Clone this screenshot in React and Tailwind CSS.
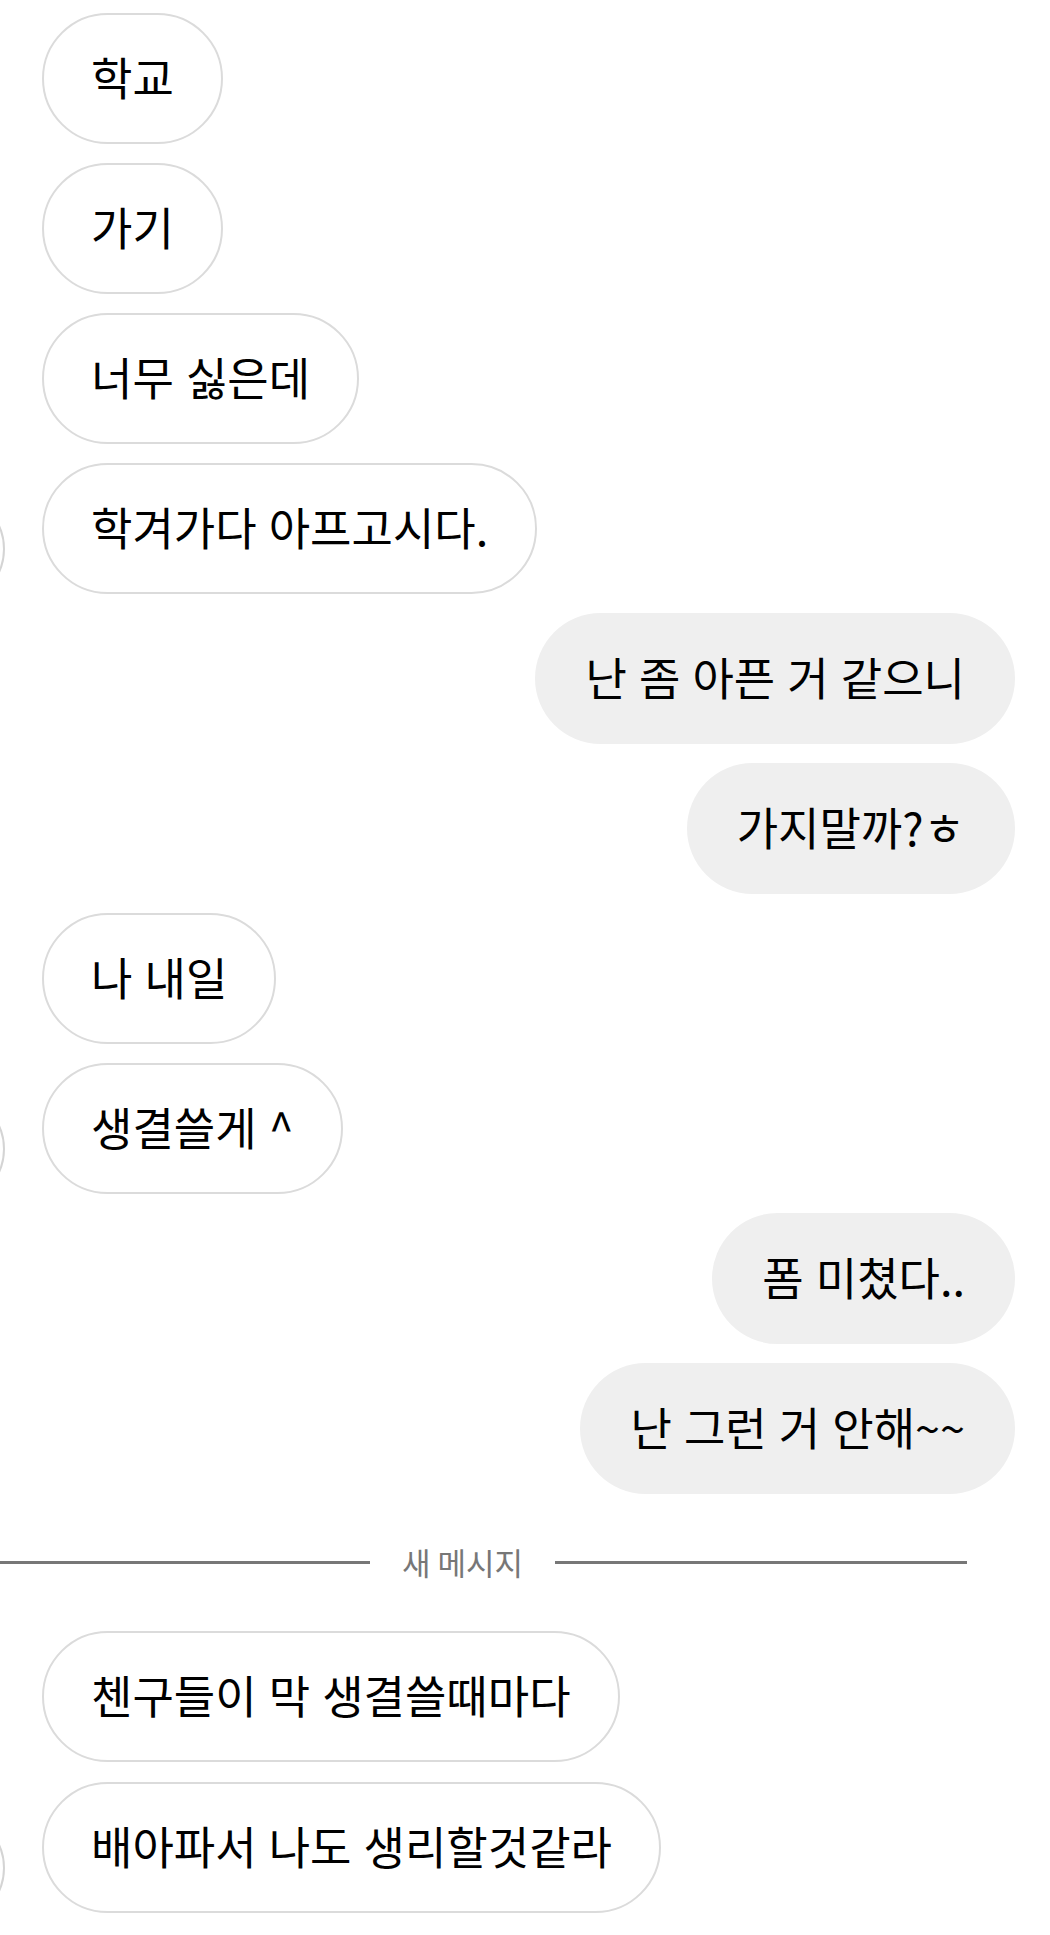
const messages = [
  { id: 1, side: "left", text: "학교" },
  { id: 2, side: "left", text: "가기" },
  { id: 3, side: "left", text: "너무 싫은데" },
  { id: 4, side: "left", text: "학겨가다 아프고시다.", avatar: true },
  { id: 5, side: "right", text: "난 좀 아픈 거 같으니" },
  { id: 6, side: "right", text: "가지말까?ㅎ" },
  { id: 7, side: "left", text: "나 내일" },
  { id: 8, side: "left", text: "생결쓸게 ^", avatar: true },
  { id: 9, side: "right", text: "폼 미쳤다.." },
  { id: 10, side: "right", text: "난 그런 거 안해~~" },
];

const unread = [
  { id: 11, side: "left", text: "첸구들이 막 생결쓸때마다" },
  { id: 12, side: "left", text: "배아파서 나도 생리할것같라", avatar: true },
];

function Bubble({ msg }) {
  const mine = msg.side === "right";
  return (
    <div className={`relative flex ${mine ? "justify-end" : "justify-start"}`}>
      {msg.avatar && (
        <div className="absolute left-[-149px] top-[30px] h-[112px] w-[112px] rounded-full border-[2.5px] border-[#d4d4d4] bg-white" />
      )}
      <div
        className={
          mine
            ? "flex h-[131px] items-center rounded-full bg-[#efefef] px-[50px] pb-[4px] text-[45px] text-black"
            : "flex h-[131px] items-center rounded-full border-[2.5px] border-[#dbdbdb] bg-white px-[47px] pb-[4px] text-[45px] text-black"
        }
      >
        <span className="whitespace-nowrap [word-spacing:2px]">{msg.text}</span>
      </div>
    </div>
  );
}

export default function App() {
  return (
    <div
      className="h-[1935px] w-[1050px] overflow-hidden bg-white"
      style={{ fontFamily: '"Noto Sans CJK KR", "Noto Sans", sans-serif' }}
    >
      <div className="flex flex-col gap-[19px] pl-[42px] pr-[35px] pt-[13px]">
        {messages.map((m) => (
          <Bubble key={m.id} msg={m} />
        ))}
      </div>

      <div className="flex h-[137px] items-center">
        <div className="h-[3px] w-[370px] bg-[#777777]" />
        <div className="flex w-[185px] justify-center">
          <span className="whitespace-nowrap text-[31px] text-[#777777]">새 메시지</span>
        </div>
        <div className="h-[3px] w-[412px] bg-[#777777]" />
      </div>

      <div className="flex flex-col gap-[20px] pl-[42px] pr-[35px]">
        {unread.map((m) => (
          <Bubble key={m.id} msg={m} />
        ))}
      </div>
    </div>
  );
}
